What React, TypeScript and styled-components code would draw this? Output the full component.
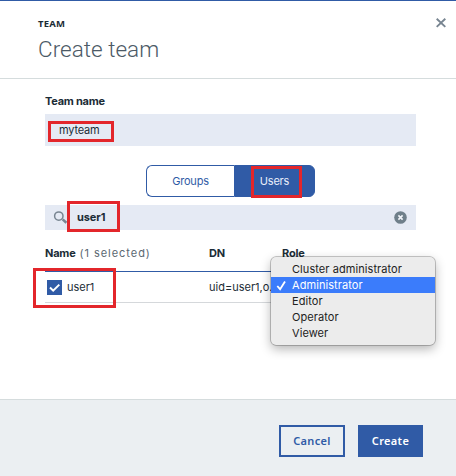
import React from "react";
import styled, { createGlobalStyle, css } from "styled-components";

const BLUE = "#305ba6";
const INK = "#1b2c36";
const RED = "#e3262b";

const GlobalStyle = createGlobalStyle`
  *, *::before, *::after { box-sizing: border-box; }
  html, body { margin: 0; padding: 0; background: #fff; }
  button, input { font: inherit; }
`;

const Modal = styled.div`
  width: 456px;
  height: 476px;
  display: flex;
  flex-direction: column;
  overflow: hidden;
  background: #fff;
  border-top: 1px solid ${BLUE};
  color: ${INK};
  font-family: Inter, "Noto Sans", sans-serif;
  font-size: 11px;
  line-height: 16px;
`;

const Header = styled.header`
  display: flex;
  justify-content: space-between;
  height: 78px;
  padding: 15px 9px 0 38px;
  border-bottom: 1px solid #d5dcdd;
`;

const Eyebrow = styled.div`
  font: 700 9.5px/16px "Noto Sans", sans-serif;
  letter-spacing: 0.2px;
`;

const Title = styled.h1`
  margin: 1px 0 0;
  font: 300 22.5px/32px Roboto, sans-serif;
  letter-spacing: 0.02px;
  color: #4c5a66;
`;

const CloseButton = styled.button`
  width: 12px;
  height: 12px;
  padding: 0;
  border: 0;
  background: none;
  svg { display: block; }
`;

const Body = styled.main`
  height: 320px;
  padding: 14px 40px 0 45px;
`;

const Label = styled.label`
  display: block;
  height: 21px;
  font-weight: 700;
  letter-spacing: -0.25px;
`;

const Field = styled.div<{ $height: number }>`
  display: flex;
  align-items: center;
  height: ${(p) => p.$height}px;
  background: #e5eaf4;
`;

/* Red annotation frame laid over the part it calls out. */
const Marked = styled.div<{ $x: number; $y: number; $w: number; $h: number }>`
  position: relative;
  &::after {
    content: "";
    position: absolute;
    left: ${(p) => p.$x}px;
    top: ${(p) => p.$y}px;
    width: ${(p) => p.$w}px;
    height: ${(p) => p.$h}px;
    border: 3px solid ${RED};
    pointer-events: none;
  }
`;

const MarkedSegment = styled(Marked)`
  display: flex;
`;

const TeamValue = styled.span`
  margin-left: 14px;
  letter-spacing: -0.2px;
`;

const Switcher = styled.div`
  display: flex;
  width: 169px;
  height: 32px;
  margin: 19px 0 8px 101px;
`;

const Segment = styled.button<{ $active?: boolean }>`
  width: ${(p) => (p.$active ? 81 : 88)}px;
  padding: 0;
  border: 1px solid ${BLUE};
  border-right-width: ${(p) => (p.$active ? 1 : 0)}px;
  border-radius: ${(p) => (p.$active ? "0 6px 6px 0" : "6px 0 0 6px")};
  background: ${(p) => (p.$active ? BLUE : "#fff")};
  color: ${(p) => (p.$active ? "#e9eefa" : BLUE)};
  letter-spacing: -0.2px;
`;

const SearchIcon = styled.svg`
  margin-left: 8px;
`;

const SearchValue = styled.span`
  flex: 1;
  margin-left: 9px;
  padding-bottom: 2px;
  font-weight: 700;
  letter-spacing: -0.1px;
`;

const ClearIcon = styled.svg`
  margin-right: 9px;
`;

const Row = styled.div<{ $head?: boolean }>`
  display: grid;
  grid-template-columns: 164px 73px 1fr;
  align-items: center;
  ${(p) =>
    p.$head
      ? css`
          height: 42px;
          padding-top: 5px;
          font-weight: 700;
          letter-spacing: -0.2px;
          border-bottom: 1px solid ${BLUE};
        `
      : css`
          height: 31px;
          letter-spacing: 0;
          border-bottom: 1px solid #d5d8db;
        `}
`;

const Cell = styled.div`
  display: flex;
  align-items: center;
  white-space: nowrap;
`;

const Count = styled.span`
  margin-left: 4px;
  font-weight: 400;
  letter-spacing: 0.95px;
  color: #5a6872;
`;

const Checkbox = styled.span`
  width: 15px;
  height: 15px;
  margin: 0 5px 0 2px;
  background: ${BLUE};
  svg { display: block; }
`;

const RoleCell = styled(Cell)`
  position: relative;
  align-self: start;
`;

const Menu = styled.ul`
  position: absolute;
  left: -11px;
  top: -15px;
  width: 164px;
  height: 88px;
  margin: 0;
  padding: 4px 0;
  list-style: none;
  border-radius: 5px;
  background: #ececec;
  box-shadow: 0 0 0 0.75px rgba(0, 0, 0, 0.28), 0 4px 11px rgba(0, 0, 0, 0.3);
`;

const Option = styled.li<{ $selected?: boolean }>`
  display: flex;
  align-items: center;
  height: 16px;
  color: ${(p) => (p.$selected ? "#fff" : "#222")};
  background: ${(p) => (p.$selected ? "#3b7cfb" : "transparent")};
  font: 400 11px/16px Inter, sans-serif;
  letter-spacing: 0.07px;
`;

const OptionMark = styled.span`
  width: 21px;
  padding-left: 5px;
  svg { display: block; }
`;

const Footer = styled.footer`
  display: flex;
  justify-content: flex-end;
  gap: 13px;
  height: 77px;
  padding: 25px 33px 0 0;
  border-top: 1px solid #d5dcdd;
  background: #ebeff2;
`;

const Action = styled.button<{ $primary?: boolean }>`
  width: ${(p) => (p.$primary ? 65 : 66)}px;
  height: 32px;
  padding: 0;
  border: 2px solid ${BLUE};
  background: ${(p) => (p.$primary ? BLUE : "transparent")};
  color: ${(p) => (p.$primary ? "#fff" : BLUE)};
  font: 600 11px/16px "Noto Sans", sans-serif;
  letter-spacing: 0.35px;
`;

const roles = ["Cluster administrator", "Administrator", "Editor", "Operator", "Viewer"];

export default function App() {
  return (
    <>
      <GlobalStyle />
      <Modal>
        <Header>
          <div>
            <Eyebrow>TEAM</Eyebrow>
            <Title>Create team</Title>
          </div>
          <CloseButton aria-label="Close">
            <svg width="12" height="14" viewBox="0 0 12 14">
              <path d="M1.7 2.7l8.6 8.2M10.3 2.7L1.7 10.9" stroke="#788591" strokeWidth="1.9" />
            </svg>
          </CloseButton>
        </Header>
        <Body>
          <Label>Team name</Label>
          <Marked $x={3} $y={7} $w={66} $h={21}>
            <Field $height={32}>
              <TeamValue>myteam</TeamValue>
            </Field>
          </Marked>
          <Switcher>
            <Segment>Groups</Segment>
            <MarkedSegment $x={17} $y={1} $w={51} $h={32}>
              <Segment $active>Users</Segment>
            </MarkedSegment>
          </Switcher>
          <Marked $x={22} $y={-4} $w={53} $h={31}>
            <Field $height={25}>
              <SearchIcon width="15" height="15" viewBox="0 0 15 15" fill="none" stroke="#788591">
                <circle cx="5.8" cy="6.1" r="4.2" strokeWidth="1.5" />
                <path d="M9.6 9.4l3.8 3.4" strokeWidth="2.6" />
              </SearchIcon>
              <SearchValue>user1</SearchValue>
              <ClearIcon width="13" height="13" viewBox="0 0 13 13">
                <circle cx="6.5" cy="6.5" r="6.3" fill="#6f7f8a" />
                <path d="M4.4 4.4l4.2 4.2M8.6 4.4L4.4 8.6" stroke="#f2f5fa" strokeWidth="1.6" />
              </ClearIcon>
            </Field>
          </Marked>
          <Row $head>
            <Cell>
              Name<Count>(1 selected)</Count>
            </Cell>
            <Cell>DN</Cell>
            <Cell>Role</Cell>
          </Row>
          <Marked $x={-12} $y={-4} $w={83} $h={40}>
            <Row>
              <Cell>
                <Checkbox>
                  <svg width="15" height="15" viewBox="0 0 15 15">
                    <path d="M3 7.5l3.2 3.2L12.3 4.6" fill="none" stroke="#fff" strokeWidth="2" />
                  </svg>
                </Checkbox>
                user1
              </Cell>
              <Cell>uid=user1,o...</Cell>
              <RoleCell>
                <Menu>
                  {roles.map((role) => (
                    <Option key={role} $selected={role === "Administrator"}>
                      <OptionMark>
                        {role === "Administrator" && (
                          <svg width="11" height="11" viewBox="0 0 11 11">
                            <path d="M1.3 6l2.8 3.2L9 1.5" fill="none" stroke="#fff" strokeWidth="1.8" />
                          </svg>
                        )}
                      </OptionMark>
                      {role}
                    </Option>
                  ))}
                </Menu>
              </RoleCell>
            </Row>
          </Marked>
        </Body>
        <Footer>
          <Action>Cancel</Action>
          <Action $primary>Create</Action>
        </Footer>
      </Modal>
    </>
  );
}
